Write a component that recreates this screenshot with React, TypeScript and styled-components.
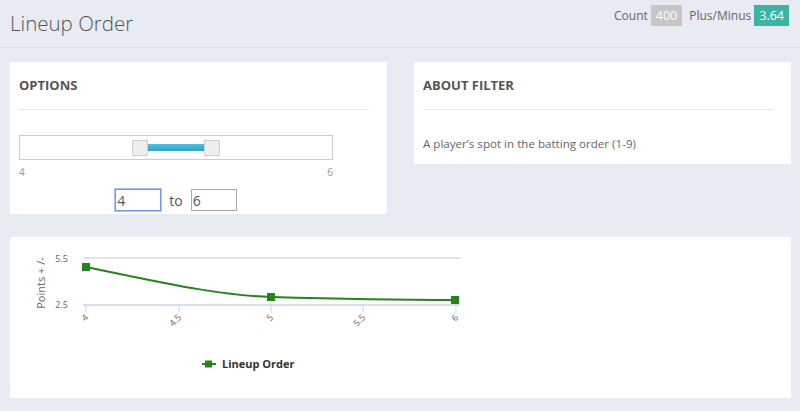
import styled, { createGlobalStyle } from "styled-components";

const GlobalStyle = createGlobalStyle`
    body {
        margin: 0;
        background: #e8ebf2;
        font-family: "Open Sans", "Liberation Sans", sans-serif;
        color: #555;
    }
`

const Header = styled.header`
    height: 47px;
    border-bottom: 1px solid #dcdfe6;
    display: flex;
    justify-content: space-between;
    align-items: flex-start;
    padding: 0 11px 0 10px;
`

const Title = styled.h1`
    margin: 8px 0 0 0;
    font-size: 20.5px;
    font-weight: 300;
    color: #555;
    line-height: 30px;
`

const Stats = styled.div`
    display: flex;
    align-items: center;
    gap: 3px;
    margin-top: 5px;
    font-size: 12px;
    color: #666;
`

const Badge = styled.span<{ $bg: string; $last?: boolean }>`
    background: ${(p) => p.$bg};
    color: #fff;
    padding: 0 5px;
    height: 21px;
    line-height: 21px;
    font-size: 12.5px;
    margin-right: ${(p) => (p.$last ? "0" : "4px")};
`

const Main = styled.main`
    padding: 14px 9px 13px 10px;
    display: flex;
    flex-direction: column;
    gap: 23px;
`

const Row = styled.div`
    display: grid;
    grid-template-columns: 377px 377px;
    justify-content: space-between;
    align-items: start;
`

const Card = styled.section<{ $h?: number }>`
    background: #fff;
    padding: 0 18px 0 9px;
    height: ${(p) => (p.$h ? `${p.$h}px` : "auto")};
    box-sizing: border-box;
`

const CardTitle = styled.h2`
    margin: 0;
    font-size: 13px;
    font-weight: 700;
    color: #555;
    line-height: 47px;
    border-bottom: 1px solid #e6e6e6;
`

const SliderWrap = styled.div`
    width: 314px;
    margin-top: 25px;
`

const Track = styled.div`
    height: 25px;
    border: 1px solid #ccc;
    box-sizing: border-box;
    display: flex;
    align-items: center;
    padding-left: 112px;
`

const Handle = styled.div`
    width: 14px;
    height: 14px;
    background: #eee;
    border: 1px solid #ccc;
`

const Range = styled.div`
    width: 56px;
    height: 7px;
    background: linear-gradient(#4fc1de, #2fa0c3);
`

const Scale = styled.div`
    display: flex;
    justify-content: space-between;
    font-size: 10px;
    color: #999;
    padding: 5px 0 0 0;
`

const Inputs = styled.div`
    display: flex;
    justify-content: center;
    align-items: center;
    gap: 8px;
    margin-top: 10px;
    font-size: 14px;
    color: #555;
`

const Field = styled.input<{ $focus?: boolean }>`
    width: 46px;
    height: 22px;
    box-sizing: border-box;
    border: 1px solid ${(p) => (p.$focus ? "#6b9cf0" : "#aaa")};
    box-shadow: ${(p) => (p.$focus ? "0 0 0 1px #a9c5f5" : "none")};
    font-family: inherit;
    font-size: 14px;
    color: #555;
    padding: 0 1px;
    outline: none;
`

const About = styled.p`
    margin: 0;
    padding: 26px 0 0 0;
    font-size: 11.6px;
    color: #666;
`

const ChartCard = styled.section`
    background: #fff;
    height: 161px;
`

const Chart = () => (
    <svg width="781" height="161" style={{ display: "block" }}>
        <line x1="73" y1="21" x2="450" y2="21" stroke="#c8c8c8" />
        <line x1="73" y1="68" x2="450" y2="68" stroke="#c8d6ea" strokeWidth="1.5" />
        {[76, 169, 261, 353, 446].map((x) => (
            <line key={x} x1={x} y1="68" x2={x} y2="76" stroke="#c8d6ea" />
        ))}
        <text x="58" y="25" textAnchor="end" fontSize="9" fill="#666" fontFamily="Open Sans">5.5</text>
        <text x="58" y="71" textAnchor="end" fontSize="9" fill="#666" fontFamily="Open Sans">2.5</text>
        <text
            transform="translate(35 46) rotate(-90)"
            textAnchor="middle"
            fontSize="11"
            fill="#666"
            fontFamily="Open Sans"
        >
            Points + /-
        </text>
        {[
            [76, "4"],
            [169, "4.5"],
            [261, "5"],
            [353, "5.5"],
            [446, "6"],
        ].map(([x, t]) => (
            <text
                key={t}
                transform={`translate(${Number(x) + 3} 81) rotate(-45)`}
                textAnchor="end"
                fontSize="9"
                fill="#666"
                fontFamily="Open Sans"
            >
                {t}
            </text>
        ))}
        <path
            d="M76 30 C 150 45, 205 58, 261 60 C 330 62, 400 63, 445 63"
            fill="none"
            stroke="#23851b"
            strokeWidth="2"
        />
        {[
            [76, 30],
            [261, 60],
            [445, 63],
        ].map(([x, y]) => (
            <rect key={x} x={x - 4} y={y - 4} width="8" height="8" fill="#23851b" />
        ))}
        <line x1="192" y1="127" x2="206" y2="127" stroke="#23851b" strokeWidth="2" />
        <rect x="195" y="123.5" width="7" height="7" fill="#23851b" />
        <text x="212" y="131" fontSize="11" fontWeight="700" fill="#333" fontFamily="Open Sans">
            Lineup Order
        </text>
    </svg>
)

export default function App() {
    return (
        <>
            <GlobalStyle />
            <Header>
                <Title>Lineup Order</Title>
                <Stats>
                    Count <Badge $bg="#c6c6c6">400</Badge>
                    Plus/Minus <Badge $bg="#3db3a6" $last>3.64</Badge>
                </Stats>
            </Header>
            <Main>
                <Row>
                    <Card $h={152}>
                        <CardTitle>OPTIONS</CardTitle>
                        <SliderWrap>
                            <Track>
                                <Handle />
                                <Range />
                                <Handle />
                            </Track>
                            <Scale>
                                <span>4</span>
                                <span>6</span>
                            </Scale>
                            <Inputs>
                                <Field $focus defaultValue="4" />
                                to
                                <Field defaultValue="6" />
                            </Inputs>
                        </SliderWrap>
                    </Card>
                    <Card $h={102}>
                        <CardTitle>ABOUT FILTER</CardTitle>
                        <About>A player’s spot in the batting order (1-9)</About>
                    </Card>
                </Row>
                <ChartCard>
                    <Chart />
                </ChartCard>
            </Main>
        </>
    );
}
